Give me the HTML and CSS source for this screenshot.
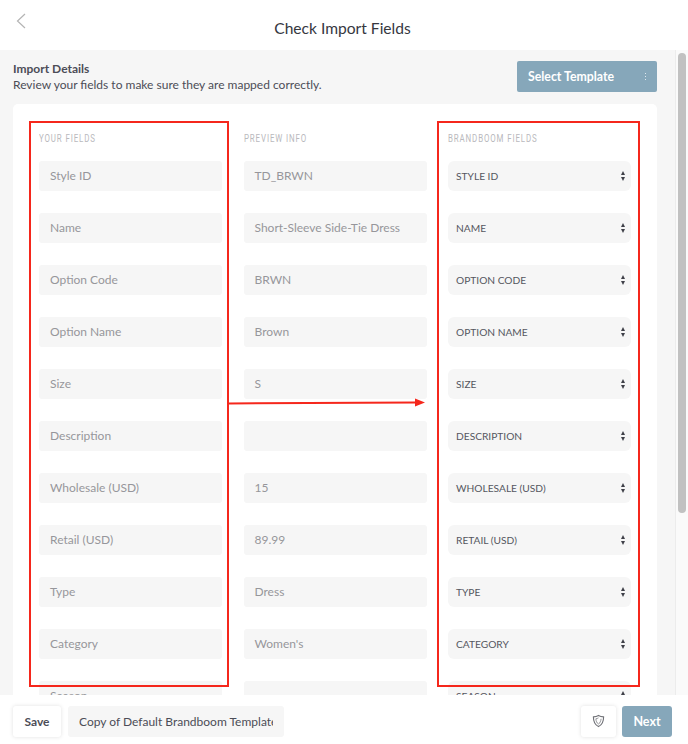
FILE: index.html
```html
<!DOCTYPE html>
<html lang="en">
<head>
    <meta charset="UTF-8">
    <meta name="viewport" content="width=device-width, initial-scale=1.0">
    <title>Check Import Fields</title>
    <link rel="stylesheet" href="styles.css">
</head>
<body>
    <div class="page">
        <header class="top-bar">
            <svg class="back-icon" width="10" height="16" viewBox="0 0 10 16"><path d="M9 1 L1.5 8 L9 15" fill="none" stroke="#b4b4b4" stroke-width="1.2"/></svg>
            <h1>Check Import Fields</h1>
        </header>

        <div class="middle">
            <main class="content">
                <div class="details-row">
                    <div class="details-text">
                        <strong>Import Details</strong>
                        <span>Review your fields to make sure they are mapped correctly.</span>
                    </div>
                    <button class="template-btn">
                        <span>Select Template</span>
                        <span class="dots"><i></i><i></i><i></i></span>
                    </button>
                </div>

                <section class="card">
                    <div class="field-grid col-heads">
                        <div class="col-head"><span>YOUR FIELDS</span></div>
                        <div class="col-head"><span>PREVIEW INFO</span></div>
                        <div class="col-head"><span>BRANDBOOM FIELDS</span></div>
                    </div>
                    <div class="field-grid">
                        <div class="cell">Style ID</div><div class="cell">TD_BRWN</div><div class="cell pick">STYLE ID</div>
                        <div class="cell">Name</div><div class="cell">Short-Sleeve Side-Tie Dress</div><div class="cell pick">NAME</div>
                        <div class="cell">Option Code</div><div class="cell">BRWN</div><div class="cell pick">OPTION CODE</div>
                        <div class="cell">Option Name</div><div class="cell">Brown</div><div class="cell pick">OPTION NAME</div>
                        <div class="cell">Size</div><div class="cell">S</div><div class="cell pick">SIZE</div>
                        <div class="cell">Description</div><div class="cell"></div><div class="cell pick">DESCRIPTION</div>
                        <div class="cell">Wholesale (USD)</div><div class="cell">15</div><div class="cell pick">WHOLESALE (USD)</div>
                        <div class="cell">Retail (USD)</div><div class="cell">89.99</div><div class="cell pick">RETAIL (USD)</div>
                        <div class="cell">Type</div><div class="cell">Dress</div><div class="cell pick">TYPE</div>
                        <div class="cell">Category</div><div class="cell">Women's</div><div class="cell pick">CATEGORY</div>
                        <div class="cell">Season</div><div class="cell"></div><div class="cell pick">SEASON</div>
                    </div>
                </section>
            </main>
            <div class="scroll-track"><div class="scroll-thumb"></div></div>

            <!-- red annotations drawn on top of the screenshot -->
            <div class="mark mark-left"></div>
            <div class="mark mark-right"></div>
            <svg class="mark-arrow" width="200" height="12" viewBox="0 0 200 12"><path d="M0 6.5 L187 5.5" stroke="#f5271c" stroke-width="2" fill="none"/><path d="M186 1.6 L196 5.5 L186 9.4 Z" fill="#f5271c"/></svg>
        </div>

        <footer class="bottom-bar">
            <button class="save-btn">Save</button>
            <div class="name-box"><span>Copy of Default Brandboom Template</span></div>
            <button class="shield-btn">
                <svg width="13" height="14" viewBox="0 0 14 14"><path d="M7 1 C5.4 2 3.4 2.5 1.5 2.6 C1.5 7 2.8 10.8 7 13 C11.2 10.8 12.5 7 12.5 2.6 C10.6 2.5 8.6 2 7 1 Z" fill="none" stroke="#6f7076" stroke-width="1.2"/><path d="M7 3.6 C6 4.2 5.2 4.5 4.2 4.6 C4.3 7 5 9 7 10.4 C8.6 9 9.6 7 9.8 4.6" fill="none" stroke="#8a8b90" stroke-width="1"/></svg>
            </button>
            <button class="next-btn">Next</button>
        </footer>
    </div>
</body>
</html>
```

FILE: styles.css
```css
* {
    box-sizing: border-box;
}
html, body {
    margin: 0;
    height: 100%;
}
body {
    font-family: Lato, "Open Sans", sans-serif;
    color: #4c4d57;
    background: #fff;
}
.page {
    height: 744px;
    display: flex;
    flex-direction: column;
    overflow: hidden;
}
.top-bar {
    position: relative;
    height: 50px;
    flex: none;
    display: flex;
    justify-content: center;
    padding: 18px 3px 0 0;
    background: #fff;
}
.top-bar h1 {
    margin: 0;
    font-size: 15.6px;
    line-height: 20px;
    font-weight: 400;
    color: #36373f;
}
.back-icon {
    position: absolute;
    left: 16px;
    top: 13px;
}
.middle {
    position: relative;
    flex: 1;
    min-height: 0;
    display: flex;
    overflow: hidden;
}
.content {
    flex: 1;
    min-width: 0;
    padding: 11px 18px 0 13px;
    background: #f6f6f6;
}
.details-row {
    display: flex;
    justify-content: space-between;
    align-items: flex-start;
    height: 43px;
}
.details-text {
    display: flex;
    flex-direction: column;
    font-size: 12px;
    line-height: 16px;
}
.details-text strong {
    font-weight: 700;
}
.template-btn {
    width: 140px;
    height: 31px;
    display: flex;
    justify-content: space-between;
    align-items: center;
    padding: 0 11px;
    border: none;
    border-radius: 2px;
    background: #86a7ba;
    color: #fff;
    font: 700 12.3px Lato, sans-serif;
}
.dots {
    display: flex;
    flex-direction: column;
    gap: 1.5px;
}
.dots i {
    width: 1.5px;
    height: 1.5px;
    background: #dfe8ee;
}
.card {
    height: 640px;
    padding: 27px 26px 0;
    background: #fff;
    border-radius: 5px;
}
.field-grid {
    display: grid;
    grid-template-columns: repeat(3, 183px);
    grid-auto-rows: 30px;
    column-gap: 21.5px;
    row-gap: 22px;
}
.col-heads {
    grid-auto-rows: 16px;
    margin-bottom: 14px;
}
.col-head {
    font-family: Roboto, sans-serif;
    font-size: 11px;
    line-height: 16px;
    letter-spacing: 1.2px;
    color: #b9b9bd;
    white-space: nowrap;
}
.col-head span {
    display: inline-block;
    transform: scaleX(0.72);
    transform-origin: left center;
}
.cell {
    height: 30px;
    padding: 0 11px;
    border-radius: 3px;
    background: #f6f6f6;
    color: #96969b;
    font-size: 12px;
    line-height: 30px;
    white-space: nowrap;
    overflow: hidden;
}
.pick {
    position: relative;
    padding: 0 8px;
    border-radius: 6px;
    color: #55565f;
    font-size: 10.2px;
}
.pick::before, .pick::after {
    content: "";
    position: absolute;
    right: 6px;
    border-left: 2.5px solid transparent;
    border-right: 2.5px solid transparent;
}
.pick::before {
    top: 10px;
    border-bottom: 4px solid #3f4048;
}
.pick::after {
    top: 15.5px;
    border-top: 4px solid #3f4048;
}
.scroll-track {
    width: 13px;
    flex: none;
    padding: 3px 0 0 2px;
    background: #fafafa;
    border-left: 1px solid #ececec;
}
.scroll-thumb {
    width: 8px;
    height: 460px;
    border-radius: 4px;
    background: #c1c1c1;
}
.mark {
    position: absolute;
    top: 71px;
    width: 200px;
    height: 566px;
    border: 2px solid #f5271c;
}
.mark-left {
    left: 29px;
}
.mark-right {
    left: 437px;
    width: 203px;
}
.mark-arrow {
    position: absolute;
    left: 229px;
    top: 347px;
}
.bottom-bar {
    height: 49px;
    flex: none;
    display: flex;
    align-items: flex-start;
    padding: 11px 16px 0 13px;
    background: #fff;
}
.bottom-bar button {
    height: 31px;
    border: none;
    border-radius: 3px;
    font: 700 12px Lato, sans-serif;
}
.save-btn {
    width: 48px;
    background: #fff;
    color: #4c4d57;
    box-shadow: 0 0 4px rgba(0, 0, 0, 0.12);
}
.name-box {
    width: 216px;
    height: 31px;
    margin-left: 7px;
    padding: 0 11px;
    border-radius: 3px;
    background: #f6f6f6;
    font-size: 12px;
    line-height: 31px;
}
.name-box span {
    display: block;
    overflow: hidden;
    white-space: nowrap;
}
.bottom-bar .shield-btn {
    width: 35px;
    margin-left: auto;
    padding: 2px 0 0;
    background: #fff;
    box-shadow: 0 0 4px rgba(0, 0, 0, 0.12);
}
.bottom-bar .next-btn {
    width: 50px;
    margin-left: 6px;
    background: #86a7ba;
    color: #fff;
    font-size: 12.5px;
}
```
